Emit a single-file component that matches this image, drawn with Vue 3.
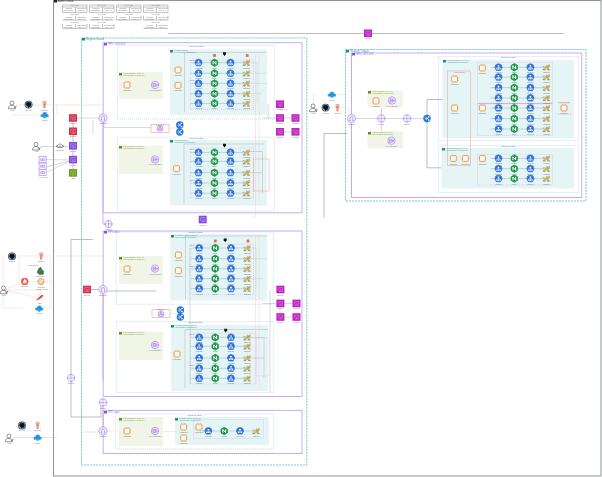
<script setup>
const rect = (kind, x1, y1, x2, y2) => ({ kind, x: x1, y: y1, w: x2 - x1, h: y2 - y1 })

const frames = [
  rect('cloud', 53.5, 0.5, 601, 476),
  rect('region', 81.5, 38, 306.8, 465),
  rect('region', 345.5, 49.5, 586, 201),
  rect('vpc', 103.2, 42.7, 302, 212.8),
  rect('vpc', 103.2, 231, 302, 396.5),
  rect('vpc', 103.2, 410.4, 302, 453.5),
  rect('vpc pink', 351.5, 53, 581.8, 197.5),
  rect('zone', 117.5, 45.5, 274.5, 119),
  rect('zone', 117.5, 137.2, 274.5, 211),
  rect('zone', 116.3, 232, 273.3, 304.3),
  rect('zone', 116.3, 321.5, 273.3, 392.5),
  rect('zone', 115.6, 414, 273.3, 449),
  rect('zone', 438.5, 56.5, 578.5, 140.5),
  rect('zone', 438.5, 145.5, 578.5, 192.5),
  rect('public', 119, 72, 163, 99),
  rect('public', 119, 145.5, 163, 174),
  rect('public', 119, 256, 163, 284),
  rect('public', 119, 331.5, 163, 360),
  rect('public', 119, 417, 163, 446),
  rect('public', 367.5, 90.5, 403, 107.5),
  rect('public', 367.5, 131.5, 403, 148.5),
  rect('private', 170, 49.5, 267, 115),
  rect('private', 170, 140, 267, 205.5),
  rect('private', 170.3, 234, 267.3, 300.5),
  rect('private', 171, 325, 268, 391),
  rect('private', 175, 417, 269, 445),
  rect('private', 442.5, 60, 574, 138),
  rect('private', 441.5, 148, 574, 188.5),
  rect('group', 190.5, 60, 253.5, 109.5),
  rect('group', 190.5, 148, 253.5, 198),
  rect('group', 190.5, 244, 253.5, 294.5),
  rect('group', 190.5, 333, 256, 384),
  rect('group', 193.5, 419.5, 263.5, 438.5),
  rect('group', 477.5, 62.5, 552.5, 103),
  rect('group', 477.5, 103.8, 552.5, 135.5),
  rect('group', 477.5, 154.5, 552.5, 185),
  rect('alert', 447.5, 71, 470.5, 165.5),
  rect('alert solid', 151, 124.5, 169, 132.5),
  rect('alert solid', 152, 309.8, 170, 317.5),
  rect('alert', 253.5, 159, 269, 191),
  rect('group', 256, 338, 269, 376)
]

const wires = [
  ['M168 33.5H564', 'dark'],
  ['M76 118H103 M93 120v15', 'grey'],
  ['M73 120v54', 'dark'],
  ['M41 146.5H72', 'grey'],
  ['M46 159.5L72 160 M46 167L72 160 M46 172.5L72 160', 'grey'],
  ['M103 118V224H108', 'violet'],
  ['M104 121V127.5H151', 'grey'],
  ['M16 105H103', 'orange'],
  ['M12 115H43 M57 104v10', 'pink'],
  ['M93 239.5H71V417H101V402', 'dark'],
  ['M89 289.5H103 M104 291H156', 'dark'],
  ['M3 255v53H24 M12 256H103 M4 290L25 281.5H51 M4 290H41L39 297 M51 257V308H39 M19 257v25 M4 290L39 298', 'pink'],
  ['M13 437.5H57 M82 432H103', 'rose'],
  ['M107 431H119 M163 431.5H175', 'pink'],
  ['M103 402V431 M103 289V380', 'violet'],
  ['M313.5 107V94 M325 107.5H348L351.5 118 M332 94.5H345', 'pink'],
  ['M351.5 118.5H427 M381.5 108V131', 'grey'],
  ['M427 118.5V99.5H442.5 M427 118.5V167.8H441.5', 'dark'],
  ['M324 218V133.5H347', 'dark'],
  ['M263 118H296 M280 104V110H288 M268 104V118 M280 132H296', 'grey'],
  ['M262 303.5H297 M280 303V317H297 M270 289.5V392', 'grey'],
  ['M184.5 112V52.5H266 M184 204V144H264', 'grey'],
  ['M185.5 299V236H267 M185 388V329.5H268', 'grey'],
  ['M255.5 55V218 M259 55V202 M269 105V118', 'pink'],
  ['M255.5 236V384 M259 236V390', 'pink'],
  ['M246 62.7H257V103 M246 73.3H266 M246 83.5H267 M246 93.7H262', 'faint'],
  ['M246 151.5H262.5V193 M246 172.7H262.5', 'grey'],
  ['M247 248H256V289 M247 258.7H267 M247 278.7H263', 'faint'],
  ['M247 337.5H264V378 M247 358H264 M190 248V384', 'grey'],
  ['M170 128H180 M170 313.5H181', 'pink'],
  ['M557 114H572 M558 103H571', 'rose'],
  ['M477.5 103.5H552.5', 'plum']
]

const clusters = [
  { xs: [198.5, 214.5, 230.5, 246.5], ys: [62.7, 73.3, 83.4, 93.7, 103.4], marks: [0, 2] },
  { xs: [198.5, 214.5, 230.5, 246.5], ys: [152.4, 161.4, 172.7, 183, 193.2], marks: [0, 3] },
  { xs: [199.2, 215.2, 231, 247.2], ys: [248, 258.7, 268.7, 278.7, 288.7], marks: [0, 2] },
  { xs: [199.2, 215.2, 231, 247.2], ys: [337.4, 346.4, 358, 368.3, 378.4], marks: [0, 3] },
  { xs: [208.4, 224.2, 240, 256.2], ys: [431], marks: [] },
  { xs: [498.5, 514.3, 530.4, 546.5], ys: [67.3, 77.1, 87.7, 98, 108, 118.6, 129], marks: [] },
  { xs: [498.5, 514.3, 530.4, 546.5], ys: [158.4, 168.7, 178.6], marks: [] }
]
const kinds = ['pod', 'nginx', 'pod', 'tomcat']
const captions = ['ingress', 'nginx', 'service', 'tomcat']
const placed = (kind, text, dy, points) => points.map(([x, y]) => ({ kind, text, dy, x, y }))

const nodes = [
  ...clusters.flatMap(c => c.ys.flatMap(y => c.xs.map((x, i) => ({ kind: kinds[i], text: captions[i], dy: 6, x, y })))),
  ...placed('ec2', 'Instance', 6, [
    [178, 70], [178, 85.4], [176.5, 168.6], [178.4, 255], [178.4, 270.6], [177, 354],
    [183.6, 427], [183.6, 438], [199, 427], [454.6, 79], [454.6, 108], [482.4, 68],
    [482.4, 108], [564, 108], [453.4, 158.5], [465.4, 158.5], [482.4, 158.5],
    [127, 85], [127, 269], [127, 431], [376, 101]]),
  ...placed('nat', 'NAT gateway', 6, [[155, 85], [155, 159.4], [155, 268.6], [155, 345], [155, 431], [392, 100.5], [391.4, 140.7]]),
  ...placed('igw', 'gateway', 6, [[103, 118], [103, 289.5], [103, 431], [351.5, 118.5]]),
  ...placed('tgw', 'router', 6, [[108.5, 224], [71, 378], [103, 402.5], [381.2, 118.5], [407, 118.5]]),
  ...placed('lb', '', 6, [[179.8, 125], [179.8, 132], [180.4, 310], [180.4, 317], [427, 118.5]]),
  ...placed('endpoint', '', 6, [[160, 128], [161, 313.5]]),
  ...placed('service magenta', 'service', 6, [
    [280, 104.2], [280, 118], [295.5, 118], [280, 131.8], [295.5, 131.8],
    [280.4, 289.5], [280.4, 303.4], [296.5, 303.4], [280.4, 317], [296.5, 317], [368, 33.3]]),
  ...placed('service purple', 'service', 6, [[73, 145.8], [73, 159.6], [202.7, 219.5]]),
  ...placed('service red', 'service', 6, [[73, 118], [73, 131.3], [87, 289.5]]),
  ...placed('service green', 'logs', 6, [[73, 172.9]]),
  ...placed('user', 'User', 6, [[12.5, 105], [36.5, 146.3], [4, 290], [9.5, 438], [313.5, 108]]),
  ...placed('github', 'GitHub', 6, [[28.6, 104.6], [12, 256.3], [22, 425.4], [325.6, 107.6]]),
  ...placed('beacon', 'Jenkins', 6, [[44.5, 104.5], [41.2, 256], [37.6, 425.4], [337.5, 107.6]]),
  ...placed('azure', 'Cloud', 6, [[44.6, 115], [39.2, 308.4], [37.6, 437.5], [331.8, 94.6]]),
  ...placed('leaf', 'database', 6, [[40.5, 271]]),
  ...placed('flame', 'metrics', 6, [[24.7, 281.4]]),
  ...placed('gauge', 'grafana', 6, [[41, 281.6]]),
  ...placed('feather', 'logs', 6, [[39.5, 297.8]]),
  ...placed('net', 'internet', 5, [[60, 146]]),
  ...placed('box', '', 6, [[42.6, 159.6], [42.6, 166.2], [42.6, 172.5]]),
  ...placed('chip', '', 4, [[224.5, 53.7], [224.5, 145.2], [225.2, 240], [225.7, 330.3]]),
  ...placed('tag', '', 4, [[214.5, 55.5], [247.2, 55.5], [215.3, 241], [248, 241]])
]

const headings = [
  ['ink', 54, 0, 'AWS Cloud', 3],
  ['teal', 82, 38, 'Region Seoul', 3],
  ['teal', 346, 50, 'Region Tokyo', 3],
  ['violet', 104, 43, 'VPC 10.0.0.0', 3],
  ['violet', 104, 231, 'VPC dev', 3],
  ['violet', 104, 411, 'VPC ops', 3],
  ['violet', 352, 53, 'VPC 10.1.0.0', 3],
  ['olive', 119, 73, 'Public subnet 10.0.1.0', 2],
  ['olive', 119, 146, 'Public subnet 10.0.2.0', 2],
  ['olive', 119, 257, 'Public subnet 10.2.1.0', 2],
  ['olive', 119, 332, 'Public subnet 10.2.2.0', 2],
  ['olive', 119, 418, 'Public subnet 10.3.1.0', 2],
  ['olive', 368, 91, 'Public subnet 10.1.1.0', 2],
  ['olive', 368, 132, 'Public subnet 10.1.2.0', 2],
  ['teal', 170, 50, 'Private subnet', 2],
  ['teal', 170, 140, 'Private subnet', 2],
  ['teal', 171, 235, 'Private subnet 10.2.3.0', 2],
  ['teal', 171, 325, 'Private subnet 10.2.4.0', 2],
  ['teal', 175, 418, 'Private subnet 10.3.3.0', 2],
  ['teal', 443, 60, 'Private subnet 10.1.3.0', 2],
  ['teal', 442, 148, 'Private subnet 10.1.4.0', 2]
]
const zoneLabels = [[196, 47], [196, 139], [195, 233], [195, 323], [194, 416], [508, 58], [508, 147]]

const box = 'M0 0H24.5V7.5H0ZM0 2H24.5M13 2V7.5'
const open = 'M0 6.500H24.500M13 2V6.500'
const sided = 'M0 2V6.500H24.500V2M13 2V6.500'
const sheets = [
  [62.5, 5, box], [89.5, 5, box], [116.5, 5, box], [143.5, 5, box],
  [62.5, 13.5, open], [89.5, 13.5, open], [116.5, 13.5, sided], [143.5, 13.5, sided],
  [62.5, 22, sided], [89.5, 22, sided], [143.5, 22, open]
]
const notes = clusters.flatMap(c => c.marks.map(m => [192, c.ys[m] - 2]))
</script>

<template>
  <main class="page">
    <svg class="diagram" viewBox="0 0 602 477" role="img" aria-label="AWS Cloud">
      <defs>
        <g id="pod">
          <path d="M0-3.600L2.700-2.600 3.600 0 2.200 3.100H-2.200L-3.600 0-2.700-2.600Z" fill="#2e72d8" stroke="#2e72d8" stroke-width=".7" stroke-linejoin="round" />
          <path d="M0-1V.5M-1.600 1.300V.4H1.600V1.300" fill="none" stroke="#fff" stroke-width=".5" />
          <path d="M-.8-2h1.600v1.200h-1.600zM-2.200 1h1.200v1.100h-1.200zM-.6 1h1.200v1.100h-1.200zM1 1h1.200v1.100H1z" fill="#fff" />
        </g>
        <g id="nginx">
          <path d="M0-3.700L3.200-1.900V1.900L0 3.700-3.200 1.900V-1.900Z" fill="#169344" stroke="#169344" stroke-width=".7" stroke-linejoin="round" />
          <path d="M-1.400 1.700V-1.600L1.400 1.600V-1.700" fill="none" stroke="#fff" stroke-width="1" />
        </g>
        <g id="tomcat">
          <path d="M-3.300 2.300L-2.300.4-.8-.5.2-2.400 1.200-1.700 3-2.700 3.200-.5 1.800.7 2.500 2.400 1 2.200 0 1-1.600 2.500Z" fill="#e3c46a" stroke="#a08d52" stroke-width=".4" />
          <path d="M-3.900-.6L-2-1.200M-3.800 2.600H-1M.6 2.600H3.600M.7-1.200L2.300-.4M0-.8L1 .9" stroke="#6e6850" stroke-width=".5" />
        </g>
        <g id="ec2">
          <rect x="-2.900" y="-2.900" width="5.800" height="5.800" rx="1" fill="#fff8ef" stroke="#e9a25a" stroke-width="1" />
          <path d="M-3.800-1.500h.6M-3.800 0h.6M-3.800 1.500h.6M3.200-1.500h.6M3.200 0h.6M3.200 1.500h.6M-1.500-3.800v.6M1.500-3.800v.6M-1.500 3.200v.6M1.500 3.200v.6" stroke="#e9a25a" stroke-width=".5" />
        </g>
        <g id="nat" fill="none" stroke="#a582ee" stroke-width=".7">
          <circle r="3.700" fill="#f4effc" />
          <path d="M-2-1.800V1.800M-2 0H2.500M-2-1.500H.8V1.500H-2M1.500-1L2.700 0 1.500 1" />
        </g>
        <g id="igw" fill="none" stroke="#a98deb" stroke-width=".7">
          <path d="M0-4.300L3-3 4.300 0 3 3 0 4.300-3 3-4.300 0-3-3Z" fill="#f3eefc" />
          <path d="M-1.500 2V-.5A1.500 1.500 0 0 1 1.500-.5V2M-2.200 2H-.8M.8 2H2.200" />
        </g>
        <g id="tgw" fill="none" stroke="#ab8bee" stroke-width=".6">
          <circle r="3.700" fill="#faf7ff" />
          <path d="M-4 0H4M0-4V4M-1-3L0-4 1-3M-1 3L0 4 1 3M-3-1L-4 0-3 1M3-1L4 0 3 1" />
        </g>
        <g id="lb">
          <circle r="3.700" fill="#2874d4" />
          <path d="M-2.200 0H0M0 0L1.800-1.600M0 0L1.800 1.600M0 0L-1.500-1.800M0 0L-1.500 1.800" stroke="#fff" stroke-width=".6" />
          <path d="M1-2.300h1.300v1.300H1zM1 1h1.300v1.300H1z" fill="#fff" />
        </g>
        <g id="endpoint" fill="none" stroke="#a276e8" stroke-width=".7">
          <path d="M0-3L2.500-1 3 1.800 1.600 3H-1.600L-3 1.800-2.500-1Z" fill="#f4e9fd" />
          <circle cy="-1" r=".8" />
          <path d="M0-.3V1M-1.700 2.200V1H1.700V2.200" />
        </g>
        <g id="service">
          <rect x="-4" y="-3.800" width="8" height="7.600" />
          <path d="M-2.200 1.500V-2H2.200V2H-1.500M-1.200-.8L0 .2 1.200-.8M-1 1h2" fill="none" stroke="#fff" stroke-opacity=".5" stroke-width=".5" />
        </g>
        <g id="user" fill="#fff" stroke="#606873" stroke-width=".7">
          <path d="M-4 3.700C-4 1.200-2.700.3-.5.300S3 1.200 3 3.700Z" />
          <circle cx="-.5" cy="-2" r="2" />
          <path d="M1.200 1.600L2.400 3 4 .8" fill="none" />
        </g>
        <g id="github">
          <circle r="3.900" fill="#172c40" />
          <circle r="3.200" fill="none" stroke="#c4ccd3" stroke-width=".6" />
          <path d="M-2-2.200L-1-1.600H1L2-2.200 2.200 0C2.100 1 1.500 1.400.8 1.500V3.200H-.8V1.500C-1.500 1.400-2.100 1-2.200 0Z" fill="#05151e" />
          <path d="M-2.800 1.200Q-1.800 1.200-1 2.400V3.300M1 3.300V2.400" fill="none" stroke="#e8edf0" stroke-width=".5" />
        </g>
        <g id="beacon">
          <path d="M-1.900-3.500H1.900V-.8H-1.900Z" fill="#e59a7d" />
          <path d="M-1.300-.8H1.300L.8 3.700H-.8Z" fill="#dc6a49" />
          <path d="M-1.500-2.500H1.500M-1 .8H1M-.8 2.300H.8" stroke="#fbe3d2" stroke-width=".6" />
        </g>
        <g id="azure">
          <path d="M-4.200.6C-4-.5-3-.8-2.300-.8-2-2.500-.8-3.200.5-2.900 2-2.800 2.500-1.800 2.500-1 4-.9 4.500.5 4 1.400 3.500 2.200 2.500 1.900 2 2.200L0 3.500-2 2C-3 2-4.200 1.800-4.200.6Z" fill="#2fa2e2" />
          <path d="M-2 1L0-1 2 1" fill="none" stroke="#0c72c0" stroke-width=".8" />
        </g>
        <path id="leaf" d="M-3 2C-3.500 0-2-1-1.800-2.500L.4-3.800 1-1.800 3 0 2.800 3.200-.8 3.600Z" fill="#417e3d" stroke="#214e2d" stroke-width=".5" />
        <g id="flame">
          <circle r="3.700" fill="#e46348" />
          <path d="M-1.800 1C-1.500-.6-.2-1 0-2.500 1.500-1 1.800 0 1.800 1ZM-1.500 2H1.500" fill="#fff" stroke="#fff" stroke-width=".4" />
        </g>
        <g id="gauge" fill="none">
          <circle r="2.900" stroke="#ec9556" stroke-width="1.300" stroke-dasharray="1.500 .4" />
          <path d="M1.400-1A1.700 1.700 0 1 0 1.500 1H0" stroke="#efb14e" stroke-width=".7" />
        </g>
        <path id="feather" d="M-4 2.800L-1 0 2-2.800 4-3 3-.8 0 1.500-3 2.500Z" fill="#d34645" />
        <g id="net" fill="none" stroke="#4e5660" stroke-width=".6">
          <path d="M-2.300 1.500C-4 1-3-.7-2-.7-1.500-2.500 1-2.500 1.400-1 3.500-1 3.500 1.500 2 1.600Z" />
          <path d="M-4 0H-2M2.500 0H4M0-.5V2" />
        </g>
        <g id="box" fill="#fcf9ff" stroke="#b091f3" stroke-width=".7">
          <rect x="-3.500" y="-3.100" width="7" height="6.200" />
          <path d="M-2 1V-.7H2V1ZM0-1.500V1" fill="none" />
        </g>
        <path id="chip" d="M-1.500-1.500H1.500V1H.5V2H-.5V1H-1.500Z" fill="#111" />
        <path id="tag" d="M-1.400-1.400H1.400V1.400H-1.400Z" fill="#da704b" />
      </defs>

      <rect v-for="(f, i) in frames" :key="'f' + i" :class="['frame', f.kind]" :x="f.x" :y="f.y" :width="f.w" :height="f.h" />
      <path v-for="([d, tone], i) in wires" :key="'w' + i" :class="['wire', tone]" :d="d" />
      <g v-for="(c, i) in clusters" :key="'c' + i">
        <path v-for="y in c.ys" :key="y" class="wire row" :d="`M${c.xs[0] - 8} ${y}H${c.xs[3]}`" />
      </g>

      <g v-for="([x, y, d], i) in sheets" :key="'t' + i" :transform="`translate(${x} ${y})`" class="sheet">
        <path :d="d" />
        <text x="12" y="1" text-anchor="middle">VPC CIDR</text>
        <text x="3" y="4">subnet</text>
        <text x="14" y="4">10.0.0.0/24</text>
        <text x="1" y="6">AZ private</text>
        <text x="15" y="6">10.0.1.0</text>
      </g>

      <g v-for="([tone, x, y, text, size], i) in headings" :key="'h' + i" :class="['heading', tone]" :transform="`translate(${x} ${y})`">
        <rect width="3" height="2.500" />
        <text :class="size === 3 ? 'large' : 'small'" x="4" :y="size === 3 ? 2 : 1">{{ text }}</text>
        <text v-if="size === 2" class="small" x="4" y="3">App subnet 10.0.0.0/24</text>
      </g>
      <text v-for="([x, y], i) in zoneLabels" :key="'z' + i" class="zone-label" :x="x" :y="y">Availability Zone</text>
      <text v-for="([x, y], i) in notes" :key="'n' + i" class="note" :x="x" :y="y">node</text>
      <text class="warning" x="459" y="73">Auto Scaling</text>
      <text class="warning" x="564" y="103">Auto Scaling</text>
      <text class="warning" x="160" y="126">Endpoint</text>
      <text class="warning" x="161" y="310">Endpoint</text>
      <text class="caption" x="33" y="266">Monitoring</text>
      <text class="caption" x="42" y="290">prometheus</text>
      <text class="caption" x="43" y="178">VPN client</text>

      <g v-for="(n, i) in nodes" :key="'i' + i" :class="n.kind" :transform="`translate(${n.x} ${n.y})`">
        <use :href="'#' + n.kind.split(' ')[0]" />
        <text v-if="n.text" class="caption" :y="n.dy">{{ n.text }}</text>
      </g>
    </svg>
  </main>
</template>

<style>
body { margin: 0; background: #fff; }
</style>

<style scoped>
.page { width: 100%; overflow: hidden; }
.diagram { display: block; width: 100%; height: auto; font-family: "Open Sans", "Liberation Sans", sans-serif; }
.frame { fill: none; stroke-width: 1; }
.cloud { stroke: #929399; }
.region { stroke: #74c8d0; stroke-dasharray: 2 1; }
.vpc { stroke: #c3aef6; }
.vpc.pink { stroke: #d3a5f0; }
.zone { stroke: #a3cde2; stroke-width: .6; stroke-dasharray: 1 1; }
.public { fill: #f1f5e7; }
.private { fill: #e5f4f5; }
.group { stroke: #d4a9ea; stroke-width: .5; stroke-dasharray: 1 1; }
.alert { stroke: #ef9c96; stroke-width: .5; }
.alert.solid { stroke: #df8795; }
.wire { fill: none; stroke-width: .5; }
.wire.grey { stroke: #b3b5bb; }
.wire.dark { stroke: #7b7d85; }
.wire.row { stroke: #9db1b9; }
.wire.violet { stroke: #c3b2ec; stroke-width: 1; }
.wire.pink { stroke: #f7cdcd; }
.wire.orange { stroke: #f8c6b6; }
.wire.rose { stroke: #ecb4c6; }
.wire.plum { stroke: #d87fd8; }
.wire.faint { stroke: #c5d5d9; }
.sheet path { fill: none; stroke: #8a8a8a; stroke-width: .5; }
.sheet text { font-size: 2px; fill: #666; }
.large { font-size: 3px; }
.small { font-size: 2px; }
.heading.ink { fill: #23252d; }
.heading.teal { fill: #13908b; }
.heading.violet { fill: #8556dd; }
.heading.olive { fill: #5f9016; }
.zone-label { font-size: 2px; fill: #287da6; text-anchor: middle; }
.note { font-size: 2px; fill: #d244d4; text-anchor: middle; }
.warning { font-size: 2px; fill: #d15446; text-anchor: middle; }
.caption { font-size: 2px; fill: #6b6e75; text-anchor: middle; }
.magenta use { fill: #bd21bd; }
.purple use { fill: #844be0; }
.red use { fill: #d62f4b; }
.green use { fill: #6c9e18; }
</style>
